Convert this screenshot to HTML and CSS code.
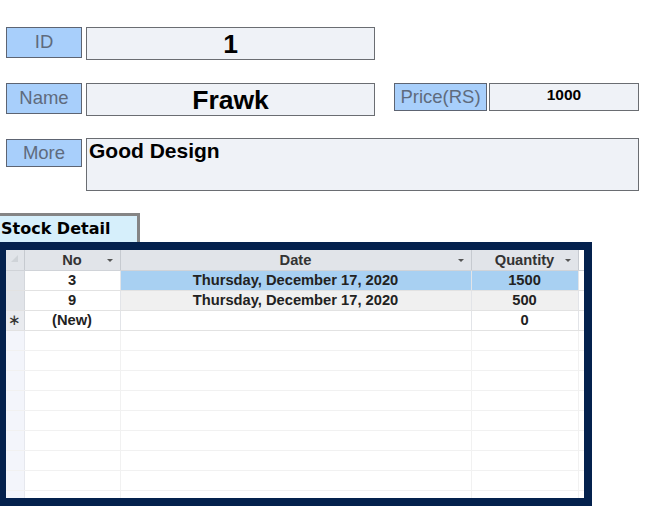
FILE: index.html
```html
<!DOCTYPE html>
<html lang="en">
<head>
    <meta charset="UTF-8">
    <title>Product</title>
    <link rel="stylesheet" href="styles.css">
</head>
<body>
    <div class="form">
        <div class="row row-id">
            <div class="label">ID</div>
            <div class="field field-big">1</div>
        </div>
        <div class="row row-name">
            <div class="label">Name</div>
            <div class="field field-big">Frawk</div>
            <div class="label label-price">Price(RS)</div>
            <div class="field field-price">1000</div>
        </div>
        <div class="row row-more">
            <div class="label label-more">More</div>
            <div class="field field-more">Good Design</div>
        </div>
    </div>

    <div class="tab">Stock Detail</div>
    <div class="grid-frame">
        <div class="grid">
            <table>
                <colgroup>
                    <col class="c-sel">
                    <col class="c-no">
                    <col class="c-date">
                    <col class="c-qty">
                    <col>
                </colgroup>
                <thead>
                    <tr>
                        <th class="sel"><span class="corner"></span></th>
                        <th>No<span class="arrow"></span></th>
                        <th>Date<span class="arrow"></span></th>
                        <th>Quantity<span class="arrow"></span></th>
                        <th class="filler"></th>
                    </tr>
                </thead>
                <tbody>
                    <tr class="current">
                        <td class="sel sel-active"></td>
                        <td>3</td>
                        <td class="hl">Thursday, December 17, 2020</td>
                        <td class="hl">1500</td>
                        <td class="filler"></td>
                    </tr>
                    <tr class="alt">
                        <td class="sel sel-active"></td>
                        <td>9</td>
                        <td class="grey">Thursday, December 17, 2020</td>
                        <td class="grey">500</td>
                        <td class="filler"></td>
                    </tr>
                    <tr class="new">
                        <td class="sel sel-new">&#x2217;</td>
                        <td>(New)</td>
                        <td></td>
                        <td>0</td>
                        <td class="filler"></td>
                    </tr>
                    <tr class="empty"><td class="sel"></td><td></td><td></td><td></td><td class="filler"></td></tr>
                    <tr class="empty"><td class="sel"></td><td></td><td></td><td></td><td class="filler"></td></tr>
                    <tr class="empty"><td class="sel"></td><td></td><td></td><td></td><td class="filler"></td></tr>
                    <tr class="empty"><td class="sel"></td><td></td><td></td><td></td><td class="filler"></td></tr>
                    <tr class="empty"><td class="sel"></td><td></td><td></td><td></td><td class="filler"></td></tr>
                    <tr class="empty"><td class="sel"></td><td></td><td></td><td></td><td class="filler"></td></tr>
                    <tr class="empty"><td class="sel"></td><td></td><td></td><td></td><td class="filler"></td></tr>
                    <tr class="empty"><td class="sel"></td><td></td><td></td><td></td><td class="filler"></td></tr>
                    <tr class="empty"><td class="sel"></td><td></td><td></td><td></td><td class="filler"></td></tr>
                </tbody>
            </table>
        </div>
    </div>
</body>
</html>
```
FILE: styles.css
```css
* {
    margin: 0;
    padding: 0;
    box-sizing: border-box;
}

body {
    background: #fff;
    font-family: Arial, 'Liberation Sans', sans-serif;
    color: #000;
}

.form {
    padding: 27px 0 0 6px;
}

.row {
    display: flex;
    align-items: flex-start;
    gap: 4px;
}

.row-name {
    margin-top: 23px;
}

.row-more {
    margin-top: 22px;
}

.label {
    width: 76px;
    height: 31px;
    background: #a8cffb;
    border: 1px solid #5d6472;
    color: #5f6b7d;
    font-size: 18.5px;
    text-align: center;
    line-height: 28px;
}

.field {
    background: #eff2f7;
    border: 1px solid #6a6d72;
    font-family: Arial, 'Liberation Sans', sans-serif;
    font-weight: bold;
}

.field-big {
    width: 289px;
    height: 33px;
    font-size: 26.5px;
    text-align: center;
    line-height: 32px;
}

.label-price {
    width: 93px;
    height: 28px;
    margin-left: 15px;
    line-height: 25px;
}

.field-price {
    width: 150px;
    height: 28px;
    margin-left: -2px;
    font-size: 15.5px;
    text-align: center;
    line-height: 22px;
}

.label-more {
    width: 76px;
    height: 28px;
    margin-top: 1px;
    line-height: 25px;
}

.field-more {
    width: 553px;
    height: 53px;
    font-size: 21px;
    line-height: 24px;
    padding: 0 0 0 2px;
}

.tab {
    margin-top: 22px;
    width: 140px;
    height: 29px;
    background: #d6effb;
    border: 3px solid #858585;
    border-left: none;
    border-bottom: none;
    font-family: 'DejaVu Sans', sans-serif;
    font-weight: bold;
    font-size: 16px;
    line-height: 26px;
    padding-left: 1px;
}

.grid-frame {
    width: 592px;
    height: 264px;
    background: #04214d;
    padding: 8px 8px 8px 6px;
}

.grid {
    height: 248px;
    background: #fff;
    overflow: hidden;
}

table {
    width: 578px;
    border-collapse: collapse;
    table-layout: fixed;
    font-family: Arial, 'Liberation Sans', sans-serif;
    font-size: 14.7px;
    font-weight: bold;
    color: #222;
}

.c-sel { width: 18px; }
.c-no { width: 96px; }
.c-date { width: 351px; }
.c-qty { width: 107px; }

th, td {
    height: 20px;
    text-align: center;
    white-space: nowrap;
    padding: 0;
}

th {
    position: relative;
    background: #e1e4e9;
    color: #333;
    font-size: 14.7px;
    border-right: 1px solid #c6cad0;
    border-bottom: 1px solid #d0d3d8;
}

th.filler {
    border-right: none;
    background: #fff;
}

.arrow {
    position: absolute;
    right: 7px;
    top: 9px;
    border-left: 3px solid transparent;
    border-right: 3px solid transparent;
    border-top: 3px solid #555;
}

.corner {
    position: absolute;
    left: 5px;
    top: 5px;
    width: 0;
    height: 0;
    border-left: 7px solid transparent;
    border-bottom: 7px solid #cfd3d8;
}

td {
    border-right: 1px solid #e2e4e8;
    border-bottom: 1px solid #e2e2e2;
}

td.filler {
    border-right: none;
    background: #fff;
}

td.sel {
    background: #f3f5fb;
    border-right: 1px solid #d4d7dc;
}

td.sel-active {
    background: #e1e4e9;
}

td.sel-new {
    background: #e9ebef;
    font-weight: normal;
    font-size: 15px;
    color: #333;
}

td.hl {
    background: #a8d0f2;
}

td.grey {
    background: #f0f0f0;
}

.empty td {
    border-bottom: 1px solid #f1f1f1;
    border-right: 1px solid #f1f1f1;
}

.empty td.sel {
    border-right: 1px solid #e6e8ee;
}

.empty td.filler {
    border-right: none;
}
```
